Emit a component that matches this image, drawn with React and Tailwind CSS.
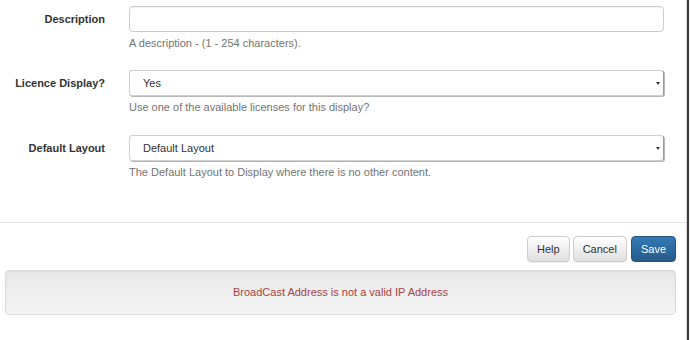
const fields = [
  { label: 'Description', type: 'input', value: '', help: 'A description - (1 - 254 characters).', gap: 'mb-[19px]' },
  { label: 'Licence Display?', type: 'select', value: 'Yes', help: 'Use one of the available licenses for this display?', gap: 'mb-[20px]' },
  { label: 'Default Layout', type: 'select', value: 'Default Layout', help: 'The Default Layout to Display where there is no other content.', gap: 'mb-0' },
];

const SelectBox = ({ value }) => (
  <div className="relative flex items-center h-[26px] w-full rounded-[3px] border border-[#cfcfcf] border-r-[#9a9a9a] bg-white shadow-[1px_1px_0_#b8b8b8] pl-[13px] text-[11px] text-[#333]">
    {value}
    <div className="absolute right-0 top-0 bottom-0 w-[10px] flex items-center justify-center">
      <div className="w-0 h-0 border-l-[2.5px] border-r-[2.5px] border-t-[3px] border-l-transparent border-r-transparent border-t-[#333]" />
    </div>
  </div>
);

const App = () => {
  return (
    <div className="flex w-[690px] h-[340px] bg-white overflow-hidden" style={{ fontFamily: '"Liberation Sans", Arial, sans-serif' }}>
      <div className="flex-1 flex flex-col">
        <div className="pt-[6px] h-[222px] pr-[22px]">
          {fields.map((f) => (
            <div key={f.label} className={`flex ${f.gap}`}>
              <div className="w-[117px] shrink-0 pr-[12px] h-[26px] flex items-center justify-end text-[11px] font-bold text-[#333]">
                {f.label}
              </div>
              <div className="flex-1 ml-[12px]">
                {f.type === 'input' ? (
                  <div className="h-[26px] w-full rounded-[4px] border border-[#cccccc] bg-white shadow-[inset_0_1px_1px_rgba(0,0,0,0.06)]" />
                ) : (
                  <SelectBox value={f.value} />
                )}
                <p className="mt-[4px] leading-[15px] text-[11px] text-[#737373]">{f.help}</p>
              </div>
            </div>
          ))}
        </div>
        <div className="border-t border-[#e5e5e5] pt-[13px] pr-[10px] flex flex-col">
          <div className="flex justify-end">
            <button className="h-[26px] px-[9px] rounded-[4px] border border-[#cccccc] bg-gradient-to-b from-white to-[#e0e0e0] text-[11px] text-[#333] shadow-[0_1px_0_rgba(0,0,0,0.05)]">
              Help
            </button>
            <button className="ml-[3px] h-[26px] px-[9px] rounded-[4px] border border-[#cccccc] bg-gradient-to-b from-white to-[#e0e0e0] text-[11px] text-[#333] shadow-[0_1px_0_rgba(0,0,0,0.05)]">
              Cancel
            </button>
            <button className="ml-[4px] h-[26px] px-[9px] rounded-[4px] border border-[#245580] bg-gradient-to-b from-[#337ab7] to-[#265a88] text-[11px] text-white">
              Save
            </button>
          </div>
          <div className="mt-[8px] ml-[5px] h-[45px] flex items-center justify-center rounded-[4px] border border-[#dcdcdc] bg-gradient-to-b from-[#e8e8e8] to-[#f5f5f5] shadow-[inset_0_1px_3px_rgba(0,0,0,0.05)] text-[11px] text-[#a94442]">
            BroadCast Address is not a valid IP Address
          </div>
        </div>
      </div>
      <div className="w-[1px] bg-[#d4d4d4]" />
      <div className="w-[2px] bg-[#3c3c3c]" />
      <div className="w-[1px] bg-[#f0f0f0]" />
    </div>
  );
};

export default App;
